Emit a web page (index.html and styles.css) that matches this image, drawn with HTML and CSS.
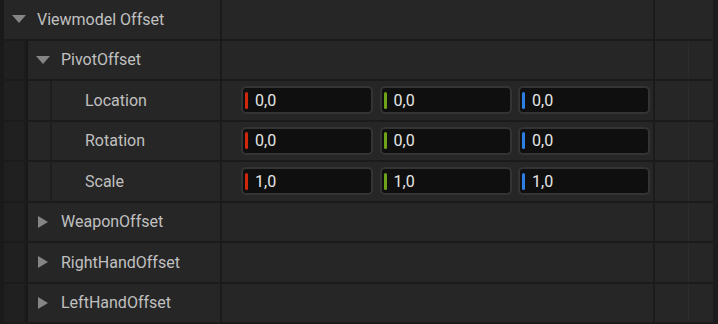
FILE: index.html
```html
<!DOCTYPE html>
<html lang="en">

<head>
    <meta charset="utf-8">
    <meta name="viewport" content="width=device-width, initial-scale=1.0">
    <title>Details - Viewmodel Offset</title>
    <link rel="stylesheet" href="styles.css">
</head>

<body>
    <main class="panel">
        <div class="edge"></div>

        <section class="rows">
            <!-- kategori -->
            <div class="row">
                <div class="name">
                    <span class="pil"><svg viewBox="0 0 14 14"><polygon points="0,3 14,3 7,11" /></svg></span>
                    <span class="label">Viewmodel Offset</span>
                </div>
                <div class="value"></div>
                <div class="extra"></div>
            </div>

            <div class="row">
                <div class="name">
                    <span class="indent"></span>
                    <span class="pil"><svg viewBox="0 0 14 14"><polygon points="0,3 14,3 7,11" /></svg></span>
                    <span class="label">PivotOffset</span>
                </div>
                <div class="value"></div>
                <div class="extra split"><span></span><span></span></div>
            </div>

            <div class="row">
                <div class="name">
                    <span class="indent"></span>
                    <span class="indent inner"></span>
                    <span class="label sub">Location</span>
                </div>
                <div class="value vector">
                    <div class="felt"><i class="x"></i>0,0</div>
                    <div class="felt"><i class="y"></i>0,0</div>
                    <div class="felt"><i class="z"></i>0,0</div>
                </div>
                <div class="extra split"><span></span><span></span></div>
            </div>

            <div class="row">
                <div class="name">
                    <span class="indent"></span>
                    <span class="indent inner"></span>
                    <span class="label sub">Rotation</span>
                </div>
                <div class="value vector">
                    <div class="felt"><i class="x"></i>0,0</div>
                    <div class="felt"><i class="y"></i>0,0</div>
                    <div class="felt"><i class="z"></i>0,0</div>
                </div>
                <div class="extra split"><span></span><span></span></div>
            </div>

            <div class="row">
                <div class="name">
                    <span class="indent"></span>
                    <span class="indent inner"></span>
                    <span class="label sub">Scale</span>
                </div>
                <div class="value vector">
                    <div class="felt"><i class="x"></i>1,0</div>
                    <div class="felt"><i class="y"></i>1,0</div>
                    <div class="felt"><i class="z"></i>1,0</div>
                </div>
                <div class="extra split"><span></span><span></span></div>
            </div>

            <div class="row">
                <div class="name">
                    <span class="indent"></span>
                    <span class="pil"><svg viewBox="0 0 14 14"><polygon points="2,1 12,7 2,13" /></svg></span>
                    <span class="label">WeaponOffset</span>
                </div>
                <div class="value"></div>
                <div class="extra split"><span></span><span></span></div>
            </div>

            <div class="row">
                <div class="name">
                    <span class="indent"></span>
                    <span class="pil"><svg viewBox="0 0 14 14"><polygon points="2,1 12,7 2,13" /></svg></span>
                    <span class="label">RightHandOffset</span>
                </div>
                <div class="value"></div>
                <div class="extra split"><span></span><span></span></div>
            </div>

            <div class="row">
                <div class="name">
                    <span class="indent"></span>
                    <span class="pil"><svg viewBox="0 0 14 14"><polygon points="2,1 12,7 2,13" /></svg></span>
                    <span class="label">LeftHandOffset</span>
                </div>
                <div class="value"></div>
                <div class="extra split"><span></span><span></span></div>
            </div>
        </section>

        <div class="scroll"></div>
    </main>
</body>

</html>
```

FILE: styles.css
```css
* {
    margin: 0;
    padding: 0;
    box-sizing: border-box;
}

body {
    font-family: Roboto, "Liberation Sans", sans-serif;
    font-size: 16px;
    background-color: #1a1a1a;
    color: #c0c0c0;
    overflow: hidden;
}

.panel {
    display: flex;
    height: 324px;
}

.edge {
    width: 4px;
    background-color: #1a1a1a;
}

.scroll {
    width: 5px;
    background-color: #1c1c1c;
}

.rows {
    display: flex;
    flex-direction: column;
    gap: 2px;
    width: 709px;
    background-color: #1b1b1b;
}

.row {
    display: flex;
    gap: 2px;
    height: 38.5px;
    flex-shrink: 0;
}

.name {
    display: flex;
    align-items: center;
    width: 216px;
    height: 100%;
    background-color: #262626;
}

.indent {
    width: 24px;
    height: 100%;
    flex-shrink: 0;
    background: linear-gradient(to right, #202020 0, #202020 78%, #161616 100%);
}

.indent.inner {
    background: linear-gradient(to right, #262626 0, #262626 88%, #1a1a1a 100%);
}

.pil {
    display: flex;
    width: 14px;
    height: 14px;
    margin-left: 8px;
    margin-right: 11px;
}

.pil svg {
    width: 14px;
    height: 14px;
    fill: #858585;
}

.label {
    white-space: nowrap;
}

.label.sub {
    margin-left: 33px;
}

.value {
    width: 431px;
    height: 100%;
    background-color: #262626;
}

.vector {
    display: grid;
    grid-template-columns: repeat(3, 1fr);
    column-gap: 6.5px;
    align-items: center;
    padding: 0 3px 0 19px;
}

.felt {
    display: flex;
    align-items: center;
    gap: 7px;
    height: 28px;
    padding-left: 2px;
    border: 2px solid #343434;
    border-radius: 5px;
    background-color: #0f0f0f;
    color: #e6e6e6;
}

.felt i {
    width: 3px;
    height: 17px;
    border-radius: 2px;
}

.x {
    background-color: #d0280c;
}

.y {
    background-color: #6fa41a;
}

.z {
    background-color: #2e7fe4;
}

.extra {
    width: 58px;
    height: 100%;
    background-color: #262626;
}

.split {
    display: flex;
    gap: 1px;
    background-color: #2c2c2c;
}

.split span {
    height: 100%;
    background-color: #262626;
}

.split span:first-child {
    width: 33px;
}

.split span:last-child {
    flex: 1;
}
```
